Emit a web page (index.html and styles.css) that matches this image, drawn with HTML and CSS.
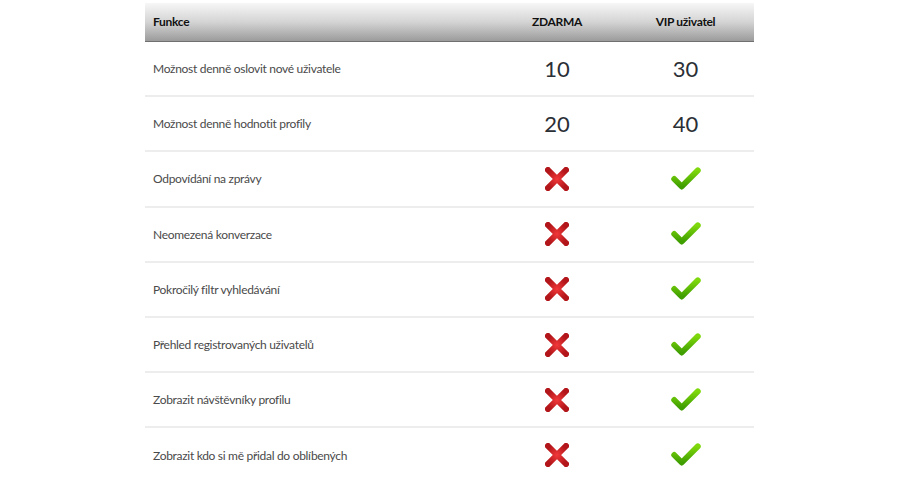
FILE: index.html
```html
<!DOCTYPE html>
<html lang="cs">
<head>
    <meta charset="UTF-8">
    <title>Srovnání účtů</title>
    <link rel="stylesheet" href="styles.css">
</head>
<body>
    <svg width="0" height="0" class="defs">
        <defs>
            <radialGradient id="redGrad" cx="50%" cy="50%" r="60%">
                <stop offset="0%" stop-color="#f2393a"/>
                <stop offset="100%" stop-color="#b3161a"/>
            </radialGradient>
            <linearGradient id="greenGrad" x1="0" y1="0" x2="0" y2="1">
                <stop offset="0%" stop-color="#7fd80c"/>
                <stop offset="100%" stop-color="#3f9e00"/>
            </linearGradient>
            <symbol id="no" viewBox="0 0 24 24">
                <path d="M3 3 L21 21 M21 3 L3 21" stroke="url(#redGrad)" stroke-width="6" stroke-linecap="square" fill="none"/>
            </symbol>
            <symbol id="yes" viewBox="0 0 28 22">
                <path d="M3 11 L10 18 L25 3" stroke="url(#greenGrad)" stroke-width="5.5" stroke-linecap="round" stroke-linejoin="round" fill="none"/>
            </symbol>
        </defs>
    </svg>

    <table class="compare">
        <thead>
            <tr>
                <th class="col-name">Funkce</th>
                <th class="col-free">ZDARMA</th>
                <th class="col-vip">VIP uživatel</th>
            </tr>
        </thead>
        <tbody>
            <tr>
                <td>Možnost denně oslovit nové uživatele</td>
                <td class="num">10</td>
                <td class="num">30</td>
            </tr>
            <tr>
                <td>Možnost denně hodnotit profily</td>
                <td class="num">20</td>
                <td class="num">40</td>
            </tr>
            <tr>
                <td>Odpovídání na zprávy</td>
                <td class="mark"><svg class="icon-no"><use href="#no"/></svg></td>
                <td class="mark"><svg class="icon-yes"><use href="#yes"/></svg></td>
            </tr>
            <tr>
                <td>Neomezená konverzace</td>
                <td class="mark"><svg class="icon-no"><use href="#no"/></svg></td>
                <td class="mark"><svg class="icon-yes"><use href="#yes"/></svg></td>
            </tr>
            <tr>
                <td>Pokročilý filtr vyhledávání</td>
                <td class="mark"><svg class="icon-no"><use href="#no"/></svg></td>
                <td class="mark"><svg class="icon-yes"><use href="#yes"/></svg></td>
            </tr>
            <tr>
                <td>Přehled registrovaných uživatelů</td>
                <td class="mark"><svg class="icon-no"><use href="#no"/></svg></td>
                <td class="mark"><svg class="icon-yes"><use href="#yes"/></svg></td>
            </tr>
            <tr>
                <td>Zobrazit návštěvníky profilu</td>
                <td class="mark"><svg class="icon-no"><use href="#no"/></svg></td>
                <td class="mark"><svg class="icon-yes"><use href="#yes"/></svg></td>
            </tr>
            <tr>
                <td>Zobrazit kdo si mě přidal do oblíbených</td>
                <td class="mark"><svg class="icon-no"><use href="#no"/></svg></td>
                <td class="mark"><svg class="icon-yes"><use href="#yes"/></svg></td>
            </tr>
        </tbody>
    </table>
</body>
</html>
```

FILE: styles.css
```css
* {
    margin: 0;
    padding: 0;
    box-sizing: border-box;
}

body {
    font-family: Lato, "Open Sans", sans-serif;
    background: #fff;
    color: #444;
    padding: 3px 0 0 145px;
}

.defs {
    position: absolute;
}

.compare {
    width: 609px;
    border-collapse: collapse;
    table-layout: fixed;
}

.compare th {
    height: 38px;
    font-size: 12px;
    font-weight: bold;
    letter-spacing: -0.3px;
    color: #111;
    background: linear-gradient(to bottom, #f7f7f7 0%, #d4d4d4 50%, #9b9b9b 100%);
    border-bottom: 1px solid #707070;
}

.col-name {
    width: 352px;
    text-align: left;
    padding-left: 8px;
}

.col-free {
    width: 120px;
    text-align: center;
}

.col-vip {
    text-align: center;
}

.compare td {
    height: 55.2px;
    font-size: 12px;
    letter-spacing: -0.3px;
    color: #4a4a4a;
    padding-left: 8px;
    border-bottom: 2px solid #ededed;
}

.compare tr:last-child td {
    border-bottom: none;
}

.compare td.num {
    padding-left: 0;
    text-align: center;
    font-size: 22px;
    letter-spacing: 0;
    color: #2b2f36;
}

.compare td.mark {
    padding-left: 0;
    text-align: center;
}

.icon-no {
    width: 24px;
    height: 24px;
    vertical-align: middle;
}

.icon-yes {
    width: 30px;
    height: 24px;
    vertical-align: middle;
}
```
